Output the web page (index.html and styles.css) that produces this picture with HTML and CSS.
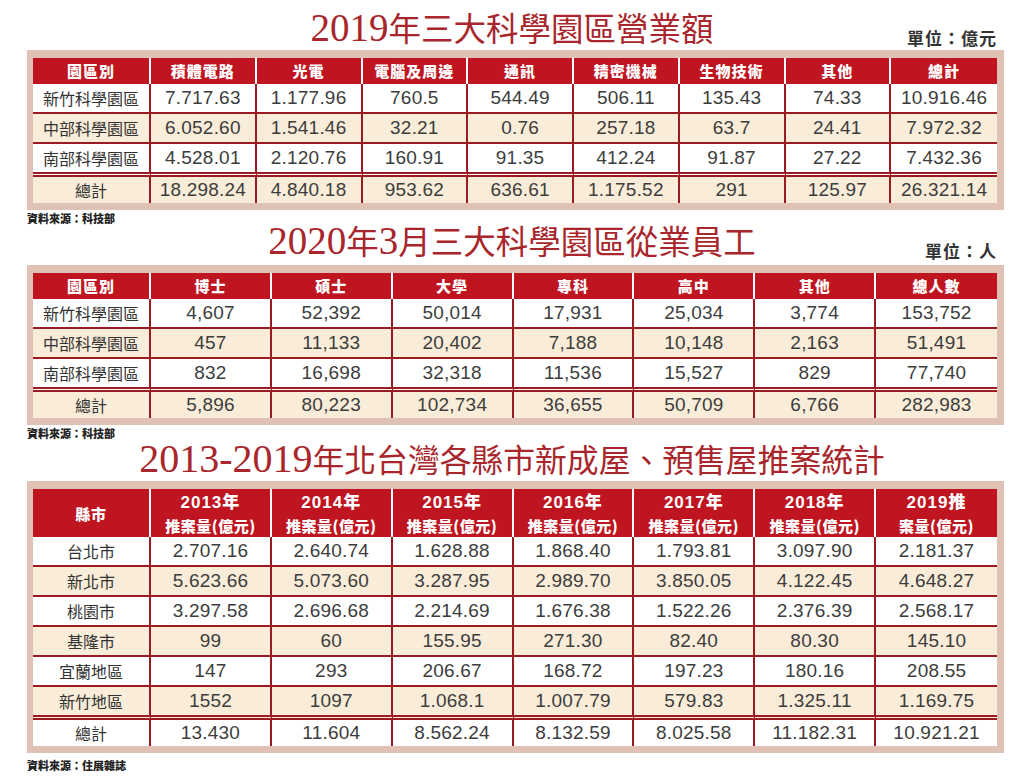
FILE: index.html
```html
<!DOCTYPE html>
<html lang="zh-Hant">
<head>
<meta charset="utf-8">
<title>科學園區統計</title>
<link rel="stylesheet" href="styles.css">
</head>
<body>
<div class="page">

  <div class="heading heading--one">
    <h1 class="title"><span class="d">2019</span>年三大科學園區營業額</h1>
    <div class="unit">單位：億元</div>
  </div>
  <div class="frame">
    <table class="grid">
      <colgroup><col class="first-col"><col><col><col><col><col><col><col><col></colgroup>
      <thead>
        <tr><th>園區別</th><th>積體電路</th><th>光電</th><th>電腦及周邊</th><th>通訊</th><th>精密機械</th><th>生物技術</th><th>其他</th><th>總計</th></tr>
      </thead>
      <tbody>
        <tr><td class="name">新竹科學園區</td><td>7.717.63</td><td>1.177.96</td><td>760.5</td><td>544.49</td><td>506.11</td><td>135.43</td><td>74.33</td><td>10.916.46</td></tr>
        <tr class="alt"><td class="name">中部科學園區</td><td>6.052.60</td><td>1.541.46</td><td>32.21</td><td>0.76</td><td>257.18</td><td>63.7</td><td>24.41</td><td>7.972.32</td></tr>
        <tr class="pre-total"><td class="name">南部科學園區</td><td>4.528.01</td><td>2.120.76</td><td>160.91</td><td>91.35</td><td>412.24</td><td>91.87</td><td>27.22</td><td>7.432.36</td></tr>
        <tr class="total alt"><td class="name">總計</td><td>18.298.24</td><td>4.840.18</td><td>953.62</td><td>636.61</td><td>1.175.52</td><td>291</td><td>125.97</td><td>26.321.14</td></tr>
      </tbody>
    </table>
  </div>
  <div class="source">資料來源：科技部</div>

  <div class="heading heading--two">
    <h1 class="title"><span class="d">2020</span>年<span class="d">3</span>月三大科學園區從業員工</h1>
    <div class="unit">單位：人</div>
  </div>
  <div class="frame">
    <table class="grid">
      <colgroup><col class="first-col"><col><col><col><col><col><col><col></colgroup>
      <thead>
        <tr><th>園區別</th><th>博士</th><th>碩士</th><th>大學</th><th>專科</th><th>高中</th><th>其他</th><th>總人數</th></tr>
      </thead>
      <tbody>
        <tr><td class="name">新竹科學園區</td><td>4,607</td><td>52,392</td><td>50,014</td><td>17,931</td><td>25,034</td><td>3,774</td><td>153,752</td></tr>
        <tr class="alt"><td class="name">中部科學園區</td><td>457</td><td>11,133</td><td>20,402</td><td>7,188</td><td>10,148</td><td>2,163</td><td>51,491</td></tr>
        <tr class="pre-total"><td class="name">南部科學園區</td><td>832</td><td>16,698</td><td>32,318</td><td>11,536</td><td>15,527</td><td>829</td><td>77,740</td></tr>
        <tr class="total alt"><td class="name">總計</td><td>5,896</td><td>80,223</td><td>102,734</td><td>36,655</td><td>50,709</td><td>6,766</td><td>282,983</td></tr>
      </tbody>
    </table>
  </div>
  <div class="source">資料來源：科技部</div>

  <div class="heading heading--three">
    <h1 class="title title--narrow"><span class="d">2013-2019</span>年北台灣各縣市新成屋、預售屋推案統計</h1>
  </div>
  <div class="frame">
    <table class="grid">
      <colgroup><col class="first-col"><col><col><col><col><col><col><col></colgroup>
      <thead>
        <tr class="tall">
          <th>縣市</th>
          <th><span class="yr">2013年</span><br>推案量(億元)</th>
          <th><span class="yr">2014年</span><br>推案量(億元)</th>
          <th><span class="yr">2015年</span><br>推案量(億元)</th>
          <th><span class="yr">2016年</span><br>推案量(億元)</th>
          <th><span class="yr">2017年</span><br>推案量(億元)</th>
          <th><span class="yr">2018年</span><br>推案量(億元)</th>
          <th><span class="yr">2019推</span><br>案量(億元)</th>
        </tr>
      </thead>
      <tbody>
        <tr><td class="name">台北市</td><td>2.707.16</td><td>2.640.74</td><td>1.628.88</td><td>1.868.40</td><td>1.793.81</td><td>3.097.90</td><td>2.181.37</td></tr>
        <tr class="alt"><td class="name">新北市</td><td>5.623.66</td><td>5.073.60</td><td>3.287.95</td><td>2.989.70</td><td>3.850.05</td><td>4.122.45</td><td>4.648.27</td></tr>
        <tr><td class="name">桃園市</td><td>3.297.58</td><td>2.696.68</td><td>2.214.69</td><td>1.676.38</td><td>1.522.26</td><td>2.376.39</td><td>2.568.17</td></tr>
        <tr class="alt"><td class="name">基隆市</td><td>99</td><td>60</td><td>155.95</td><td>271.30</td><td>82.40</td><td>80.30</td><td>145.10</td></tr>
        <tr><td class="name">宜蘭地區</td><td>147</td><td>293</td><td>206.67</td><td>168.72</td><td>197.23</td><td>180.16</td><td>208.55</td></tr>
        <tr class="alt pre-total"><td class="name">新竹地區</td><td>1552</td><td>1097</td><td>1.068.1</td><td>1.007.79</td><td>579.83</td><td>1.325.11</td><td>1.169.75</td></tr>
        <tr class="total"><td class="name">總計</td><td>13.430</td><td>11.604</td><td>8.562.24</td><td>8.132.59</td><td>8.025.58</td><td>11.182.31</td><td>10.921.21</td></tr>
      </tbody>
    </table>
  </div>
  <div class="source source--last">資料來源：住展雜誌</div>

</div>
</body>
</html>
```

FILE: styles.css
```css
* { box-sizing: border-box; }

html, body {
  margin: 0;
  padding: 0;
  background: #ffffff;
}

body {
  font-family: "Liberation Sans", "Noto Sans CJK TC", sans-serif;
  color: #3a3a3a;
}

.page {
  width: 1024px;
  padding: 0 20px 0 27px;
}

/* ---------- headings ---------- */
.heading {
  display: grid;
  grid-template-columns: 1fr auto 1fr;
  padding-right: 7px;
}

.title {
  grid-column: 2;
  align-self: start;
  margin: 0;
  font-family: "Liberation Serif", "Noto Sans CJK TC", serif;
  font-weight: 400;
  font-size: 32.5px;
  line-height: 30px;
  color: #a8262c;
  white-space: nowrap;
}

.title .d {
  font-size: 39px;
}

.title--narrow {
  font-size: 31.8px;
}

.title--narrow .d {
  font-size: 40px;
}

.unit {
  grid-column: 3;
  justify-self: end;
  align-self: end;
  font-family: "Noto Sans CJK TC", sans-serif;
  font-weight: 700;
  font-size: 17px;
  line-height: 18px;
  letter-spacing: 1px;
  color: #333333;
}

.heading--one { height: 50px; }
.heading--one .title { margin-top: 13px; }
.heading--one .unit { margin-bottom: 3px; }

.heading--two { height: 39px; }
.heading--two .title { margin-top: 0; }
.heading--two .unit { margin-bottom: 5px; }

.heading--three { height: 40px; }
.heading--three .title { margin-top: 3px; }

/* ---------- framed tables ---------- */
.frame {
  background: #dfc1b5;
  padding: 8px 7px 7px 6px;
}

.grid {
  width: 100%;
  table-layout: fixed;
  border-collapse: separate;
  border-spacing: 0;
}

.first-col { width: 118px; }

.grid th {
  padding: 0;
  background: #bf1520;
  color: #ffffff;
  font-family: "Noto Sans CJK TC", sans-serif;
  font-weight: 900;
  font-size: 15px;
  line-height: 26px;
  letter-spacing: 1px;
  text-align: center;
  border-right: 2px solid #ffffff;
}

.grid th:last-child { border-right: 0; }

.grid .tall th {
  line-height: 23px;
  padding-top: 1px;
  font-size: 15px;
  letter-spacing: 0.5px;
}

.grid .yr {
  font-family: "Liberation Sans", "Noto Sans CJK TC", sans-serif;
  font-size: 17px;
  letter-spacing: 1px;
}

.grid td {
  padding: 0;
  background: #ffffff;
  text-align: center;
  font-size: 19px;
  letter-spacing: 0.2px;
  line-height: 28px;
  color: #3d3d3d;
  border-right: 2px solid #9c1b23;
  border-bottom: 2px solid #9c1b23;
  white-space: nowrap;
}

.grid td:last-child { border-right: 0; }

.grid td.name {
  font-family: "Noto Sans CJK TC", sans-serif;
  font-size: 16px;
  letter-spacing: 0;
  color: #333333;
}

.grid tr.alt td { background: #f9ecd8; }

.grid tr.pre-total td { border-bottom: 5px double #9c1b23; }

.grid tr.total td {
  border-bottom: 0;
  line-height: 26px;
}

/* ---------- source notes ---------- */
.source {
  font-family: "Noto Sans CJK TC", sans-serif;
  font-weight: 900;
  font-size: 11px;
  line-height: 16px;
  color: #222222;
}

.source--last {
  padding-top: 4px;
}
```
